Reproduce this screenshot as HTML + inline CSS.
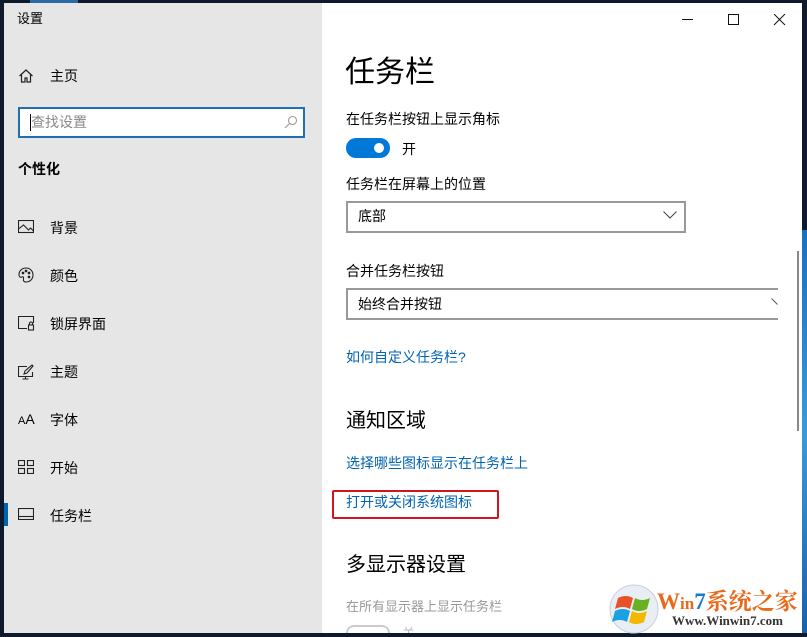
<!DOCTYPE html>
<html style="width:807px;height:637px;overflow:hidden"><head><meta charset="utf-8"><style>
*{margin:0;padding:0;box-sizing:border-box}
body{width:807px;height:637px;overflow:hidden;background:#0e1a2b;position:relative;font-family:"Liberation Sans","Noto Sans CJK SC",sans-serif;color:#000}
.t{position:absolute;white-space:nowrap;line-height:1}
#side{position:absolute;left:4px;top:3px;width:318px;height:630px;background:#e6e6e6}
#main{position:absolute;left:322px;top:3px;width:480px;height:630px;background:#fff}
#desk{position:absolute;left:802px;top:230px;width:5px;height:407px;background:linear-gradient(#1a6fc0,#3a9ad8 50%,#1a5fa8)}
.nav{font-size:14px}
.ico{position:absolute}
.link{color:#0063b1;font-size:14px}
.dd{position:absolute;height:32px;border:2px solid #999;background:#fff}
</style></head><body>
<div id="side"></div>
<div id="main"></div>
<div id="desk"></div>
<div style="position:absolute;left:30px;top:0;width:48px;height:3px;background:#2a6aa8"></div>
<div class="t" style="left:17px;top:12px;font-size:13px">设置</div>
<svg class="ico" style="left:18px;top:68px" width="16" height="16" viewBox="0 0 16 16" fill="none" stroke="#222" stroke-width="1.2"><path d="M1.5 8L8 2l6.5 6M3.5 6.5V14h3.5v-4h2v4h3.5V6.5"/></svg>
<div class="t nav" style="left:50px;top:69px">主页</div>
<div style="position:absolute;left:18px;top:107px;width:287px;height:31px;border:2px solid #1f6fb2;background:#fff"></div>
<div style="position:absolute;left:30px;top:114px;width:1px;height:17px;background:#000"></div>
<div class="t" style="left:31px;top:115px;font-size:14px;color:#888">查找设置</div>
<svg class="ico" style="left:284px;top:115px" width="14" height="14" viewBox="0 0 14 14" fill="none" stroke="#999" stroke-width="1.1"><circle cx="8.5" cy="5.5" r="4"/><path d="M5.5 8.5L1 13"/></svg>
<div class="t" style="left:18px;top:162px;font-size:14px;font-weight:bold">个性化</div>

<svg class="ico" style="left:18px;top:220px" width="16" height="14" viewBox="0 0 16 14" fill="none" stroke="#222" stroke-width="1.1"><rect x="0.5" y="0.5" width="15" height="12"/><path d="M0.5 9l5-4 5 5 2-2 3 3"/></svg>
<div class="t nav" style="left:50px;top:221px">背景</div>
<svg class="ico" style="left:18px;top:267px" width="16" height="16" viewBox="0 0 16 16" fill="none" stroke="#222" stroke-width="1.1"><path d="M8 1C4 1 1 4 1 7.5c0 3 2 3 3 2.5s2 0 1.5 2S6 15 8 15c4 0 7-3 7-7S12 1 8 1z"/><circle cx="5" cy="6" r=".8" fill="#222"/><circle cx="8" cy="4" r=".8" fill="#222"/><circle cx="11" cy="6" r=".8" fill="#222"/><circle cx="11" cy="10" r=".8" fill="#222"/></svg>
<div class="t nav" style="left:50px;top:269px">颜色</div>
<svg class="ico" style="left:18px;top:316px" width="17" height="15" viewBox="0 0 17 15" fill="none" stroke="#222" stroke-width="1.1"><path d="M9 12.5H0.5V0.5h15V7"/><rect x="10.5" y="9" width="5" height="5"/><path d="M11.5 9V7.5a1.5 1.5 0 0 1 3 0V9"/></svg>
<div class="t nav" style="left:50px;top:317px">锁屏界面</div>
<svg class="ico" style="left:18px;top:364px" width="16" height="16" viewBox="0 0 16 16" fill="none" stroke="#222" stroke-width="1.1"><path d="M9 2.5H0.5v10h14V8M7.5 12.5v2.5M4.5 15h6"/><path d="M6 10l1-3 7-6 1 1-6 7z"/></svg>
<div class="t nav" style="left:50px;top:365px">主题</div>
<div class="t" style="left:18px;top:412px;font-size:11px">A<span style="font-size:14px">A</span></div>
<div class="t nav" style="left:50px;top:413px">字体</div>
<svg class="ico" style="left:18px;top:460px" width="16" height="14" viewBox="0 0 16 14" fill="none" stroke="#222" stroke-width="1.1"><rect x="0.5" y="0.5" width="6" height="5"/><rect x="9.5" y="0.5" width="6" height="5"/><rect x="0.5" y="8.5" width="6" height="5"/><rect x="9.5" y="8.5" width="6" height="5"/></svg>
<div class="t nav" style="left:50px;top:461px">开始</div>
<div style="position:absolute;left:4px;top:503px;width:4px;height:23px;background:#0063b1"></div>
<svg class="ico" style="left:18px;top:508px" width="16" height="12" viewBox="0 0 16 12" fill="none" stroke="#222" stroke-width="1.1"><rect x="0.5" y="0.5" width="15" height="11"/><path d="M0.5 8.5h15"/></svg>
<div class="t nav" style="left:50px;top:509px">任务栏</div>

<svg class="ico" style="left:682px;top:14px" width="120" height="12" viewBox="0 0 120 12" fill="none" stroke="#111" stroke-width="1"><path d="M0 5.5h11"/><rect x="46.5" y="0.5" width="10" height="10"/><path d="M92 0l11 11M103 0L92 11"/></svg>
<div class="t" style="left:345px;top:58px;font-size:30px">任务栏</div>
<div class="t" style="left:346px;top:112px;font-size:14px">在任务栏按钮上显示角标</div>
<div style="position:absolute;left:346px;top:138px;width:44px;height:20px;border-radius:10px;background:#0078d7"></div>
<div style="position:absolute;left:374px;top:143px;width:10px;height:10px;border-radius:5px;background:#fff"></div>
<div class="t" style="left:402px;top:142px;font-size:14px">开</div>
<div class="t" style="left:346px;top:177px;font-size:14px">任务栏在屏幕上的位置</div>
<div class="dd" style="left:346px;top:201px;width:340px"></div>
<div class="t" style="left:358px;top:209px;font-size:14px">底部</div>
<svg class="ico" style="left:663px;top:211px" width="14" height="8" viewBox="0 0 14 8" fill="none" stroke="#444" stroke-width="1"><path d="M0.5 0.5l6.5 6.5 6.5-6.5"/></svg>
<div class="t" style="left:346px;top:264px;font-size:14px">合并任务栏按钮</div>
<div style="position:absolute;left:346px;top:288px;width:432px;height:32px;border:2px solid #999;border-right:none;background:#fff"></div>
<div class="t" style="left:358px;top:297px;font-size:14px">始终合并按钮</div>
<svg class="ico" style="left:771px;top:298px" width="8" height="8" viewBox="0 0 8 8" fill="none" stroke="#555" stroke-width="1"><path d="M0.5 0.5l6 6"/></svg>
<div style="position:absolute;left:797px;top:251px;width:2px;height:180px;background:#888"></div>
<div class="t link" style="left:346px;top:350px">如何自定义任务栏?</div>
<div class="t" style="left:346px;top:411px;font-size:20px">通知区域</div>
<div class="t link" style="left:346px;top:456px">选择哪些图标显示在任务栏上</div>
<div class="t link" style="left:346px;top:495px">打开或关闭系统图标</div>
<div style="position:absolute;left:332px;top:490px;width:167px;height:29px;border:2px solid #d01520;border-radius:2px"></div>
<div class="t" style="left:346px;top:555px;font-size:20px">多显示器设置</div>
<div class="t" style="left:346px;top:600px;font-size:13px;color:#999">在所有显示器上显示任务栏</div>
<div style="position:absolute;left:346px;top:625px;width:44px;height:8px;border-radius:10px 10px 0 0;border:2px solid #ccc;border-bottom:none"></div>
<div class="t" style="left:402px;top:627px;font-size:13px;color:#bbb;height:6px;overflow:hidden">关</div>
<div style="position:absolute;left:0;top:633px;width:807px;height:4px;background:#0e1a2b"></div>

<svg class="ico" style="left:608px;top:584px" width="52" height="50" viewBox="0 0 52 50"><circle cx="26" cy="25" r="24" fill="#e8eef4" stroke="#c8d0da"/><path d="M10 14q8-4 15 0l-3 11q-7-4-15 0z" fill="#e8502a"/><path d="M27 14q7 4 15 0l-3 11q-8 4-15 0z" fill="#6ab023"/><path d="M7 27q8-4 15 0l-3 11q-7-4-15 0z" fill="#1ba1e2"/><path d="M24 27q7 4 15 0l-3 11q-8 4-15 0z" fill="#f5b800"/></svg>
<div class="t" style="left:657px;top:590px;font-size:23px;font-weight:bold;font-family:'Liberation Serif','Noto Serif CJK SC',serif"><span style="color:#e86a1c">W</span><span style="color:#e86a1c;font-size:17px">in</span><span style="color:#1a7ad0">7</span><span style="color:#e86a1c">系统之家</span></div>
<div class="t" style="left:672px;top:614px;font-size:13px;font-weight:bold;color:#333;font-family:'Liberation Serif',serif">Www.Winwin7.com</div>
</body></html>
